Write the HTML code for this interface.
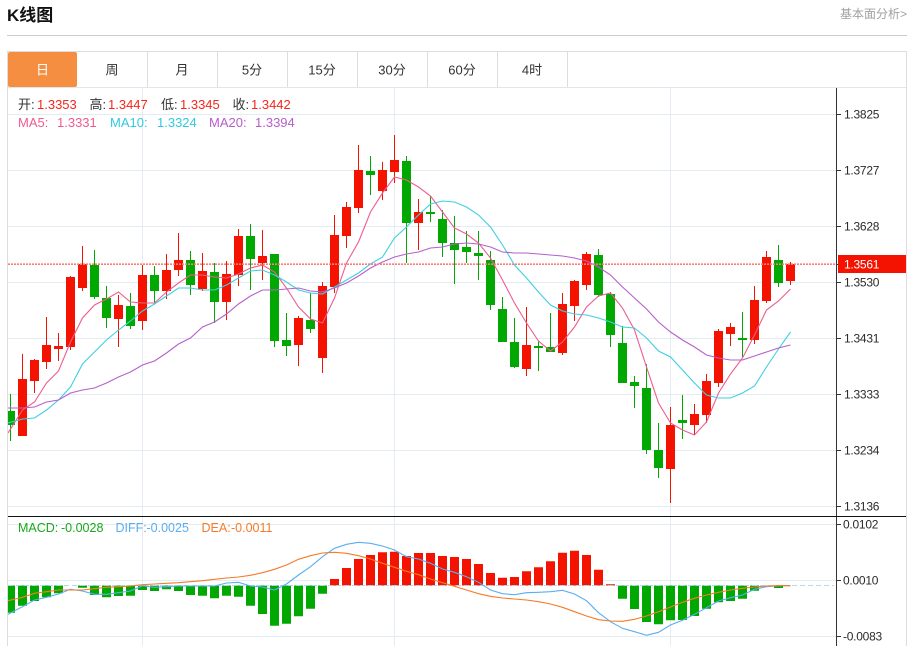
<!DOCTYPE html>
<html lang="zh"><head><meta charset="utf-8"><title>K线图</title>
<style>
html,body{margin:0;padding:0;background:#fff;width:911px;height:646px;overflow:hidden}
svg{display:block;font-family:"Liberation Sans","Noto Sans CJK SC",sans-serif}
</style></head><body>
<svg width="911" height="646" viewBox="0 0 911 646" xmlns="http://www.w3.org/2000/svg">
<defs><clipPath id="c"><rect x="8" y="88" width="828" height="558"/></clipPath></defs>
<text x="7" y="21" font-size="17" font-weight="700" fill="#111">K线图</text>
<text x="907" y="18" font-size="12" fill="#a0a0a0" text-anchor="end">基本面分析&gt;</text>
<rect x="7" y="35" width="900" height="1" fill="#ccc"/>
<!-- frame -->
<rect x="7" y="51" width="900" height="1" fill="#ddd"/>
<rect x="7" y="51" width="1" height="595" fill="#ddd"/>
<rect x="906" y="51" width="1" height="595" fill="#ddd"/>
<rect x="8" y="87" width="898" height="1" fill="#e2e6ea"/>
<path d="M147.5 52V87M217.5 52V87M287.5 52V87M357.5 52V87M427.5 52V87M497.5 52V87M567.5 52V87" stroke="#ddd" fill="none"/>
<rect x="8" y="52" width="69" height="35" rx="2" fill="#f68e42"/>
<g font-size="13" text-anchor="middle" fill="#333">
<text x="42.5" y="74.500" fill="#fff">日</text>
<text x="112" y="74.500">周</text><text x="182" y="74.500">月</text><text x="252" y="74.500">5分</text><text x="322" y="74.500">15分</text><text x="392" y="74.500">30分</text><text x="462" y="74.500">60分</text><text x="532" y="74.500">4时</text>
</g>
<!-- grid -->
<path d="M8 114.500H836M8 170.500H836M8 226.500H836M8 282.500H836M8 338.500H836M8 394.500H836M8 450.500H836M8 506.500H836M8 524.500H836M8 580.500H836M8 636.500H836M142.500 88V646M394.500 88V646M670.500 88V646" stroke="#e3ecf2" fill="none"/>
<g clip-path="url(#c)">
<!-- wicks -->
<path fill="none" stroke="#02a802" d="M10.500 394V441M94.500 250V299M106.500 286V328M130.500 293V329M154.500 266V303M190.500 251V295M214.500 263V323M250.500 224V290M274.500 254V347M286.500 313V356M310.500 293V333M370.500 156V195M406.500 156V263M430.500 196V222M442.500 210V257M454.500 216V284M466.500 231V263M478.500 231V280M490.500 251V310M502.500 297V342M514.500 318V368M538.500 341V371M550.500 313V352M598.500 249V297M610.500 292V347M622.500 326V383M634.500 376V408M646.500 364V454M658.500 423V478M682.500 395V439M742.500 312V357M778.500 245V287"/>
<path fill="none" stroke="#f41300" d="M22.500 354V436M34.500 359V393M46.500 317V369M58.500 333V361M70.500 276V350M82.500 246V291M118.500 295V347M142.500 265V330M166.500 254V299M178.500 233V276M202.500 253V291M226.500 261V320M238.500 229V286M262.500 230V280M298.500 316V366M322.500 282V373M334.500 215V293M346.500 202V248M358.500 145V213M382.500 162V200M394.500 135V183M418.500 199V250M526.500 307V376M562.500 293V355M574.500 280V321M586.500 252V290M670.500 407V503M694.500 404V435M706.500 374V423M718.500 329V387M730.500 323V346M754.500 286V344M766.500 251V303M790.500 262V285"/>
<!-- bodies -->
<path fill="#02a802" d="M6 411h9v14h-9zM90 265h9v32h-9zM102 298h9v20h-9zM126 306h9v20h-9zM150 275h9v16h-9zM186 260h9v25h-9zM210 272h9v30h-9zM246 236h9v23h-9zM270 254h9v87h-9zM282 340h9v6h-9zM306 320h9v9h-9zM366 171h9v4h-9zM402 161h9v62h-9zM426 212h9v2h-9zM438 219h9v24h-9zM450 243h9v7h-9zM462 247h9v5h-9zM474 253h9v3h-9zM486 260h9v45h-9zM498 309h9v33h-9zM510 342h9v25h-9zM534 346h9v2h-9zM546 347h9v5h-9zM594 255h9v40h-9zM606 294h9v41h-9zM618 343h9v40h-9zM630 382h9v4h-9zM642 388h9v62h-9zM654 450h9v18h-9zM678 420h9v3h-9zM738 338h9v2h-9zM774 260h9v23h-9z"/>
<path fill="#f41300" d="M18 379h9v57h-9zM30 360h9v21h-9zM42 345h9v17h-9zM54 346h9v3h-9zM66 277h9v70h-9zM78 264h9v24h-9zM114 305h9v14h-9zM138 275h9v46h-9zM162 270h9v21h-9zM174 260h9v10h-9zM198 271h9v18h-9zM222 274h9v28h-9zM234 236h9v39h-9zM258 256h9v7h-9zM294 318h9v27h-9zM318 286h9v72h-9zM330 235h9v52h-9zM342 207h9v29h-9zM354 170h9v38h-9zM378 170h9v21h-9zM390 160h9v12h-9zM414 212h9v11h-9zM522 345h9v24h-9zM558 304h9v49h-9zM570 281h9v25h-9zM582 254h9v31h-9zM666 425h9v44h-9zM690 414h9v11h-9zM702 381h9v34h-9zM714 331h9v52h-9zM726 327h9v7h-9zM750 300h9v40h-9zM762 257h9v44h-9zM786 264h9v17h-9z"/>
<!-- MA -->
<polyline fill="none" stroke="#ee5c90" stroke-width="1.100" points="8,433 22.500,410 34.500,402 46.500,383 58.500,371 70.500,342 82.500,318 94.500,305 106.500,299 118.500,292 130.500,302 142.500,303 154.500,303 166.500,292 178.500,283 190.500,275 202.500,275 214.500,277 226.500,278 238.500,274 250.500,268 262.500,265 274.500,272 286.500,288 298.500,307 310.500,319 322.500,323 334.500,298 346.500,263 358.500,242 370.500,212 382.500,193 394.500,177 406.500,180 418.500,187 430.500,196 442.500,212 454.500,228 466.500,234 478.500,243 490.500,258 502.500,280 514.500,303 526.500,323 538.500,341 550.500,351 562.500,342 574.500,327 586.500,307 598.500,296 610.500,293 622.500,308 634.500,330 646.500,367 658.500,403 670.500,423 682.500,430 694.500,435 706.500,422 718.500,393 730.500,374 742.500,358 754.500,335 766.500,310 778.500,301 790.500,289"/>
<polyline fill="none" stroke="#3fcfe2" stroke-width="1.100" points="8,423 22.500,419 34.500,418 46.500,410 58.500,400 70.500,387 82.500,364 94.500,352 106.500,340 118.500,330 130.500,321 142.500,311 154.500,304 166.500,296 178.500,288 190.500,288 202.500,290 214.500,290 226.500,285 238.500,278 250.500,271 262.500,270 274.500,275 286.500,282 298.500,290 310.500,293 322.500,294 334.500,287 346.500,280 358.500,273 370.500,264 382.500,257 394.500,238 406.500,227 418.500,215 430.500,204 442.500,201 454.500,202 466.500,207 478.500,215 490.500,227 502.500,245 514.500,265 526.500,278 538.500,292 550.500,305 562.500,311 574.500,314 586.500,315 598.500,318 610.500,322 622.500,327 634.500,328 646.500,338 658.500,351 670.500,357 682.500,370 694.500,383 706.500,395 718.500,398 730.500,398 742.500,393 754.500,386 766.500,367 778.500,349 790.500,332"/>
<polyline fill="none" stroke="#b65fcc" stroke-width="1.100" points="8,408 22.500,408 34.500,407 46.500,402 58.500,400 70.500,393 82.500,390 94.500,388 106.500,383 118.500,377 130.500,372 142.500,365 154.500,361 166.500,353 178.500,344 190.500,338 202.500,327 214.500,322 226.500,314 238.500,304 250.500,296 262.500,290 274.500,290 286.500,289 298.500,288 310.500,291 322.500,292 334.500,288 346.500,283 358.500,276 370.500,268 382.500,262 394.500,257 406.500,254 418.500,252 430.500,248 442.500,247 454.500,244 466.500,243 478.500,244 490.500,247 502.500,252 514.500,253 526.500,253 538.500,254 550.500,255 562.500,256 574.500,258 586.500,261 598.500,267 610.500,275 622.500,287 634.500,298 646.500,309 658.500,322 670.500,332 682.500,340 694.500,347 706.500,355 718.500,358 730.500,360 742.500,360 754.500,356 766.500,352 778.500,348 790.500,345"/>
<!-- MACD bars -->
<path fill="#02a802" d="M6 585.500h9V612.700h-9zM18 585.500h9V605.700h-9zM30 585.500h9V601h-9zM42 585.500h9V597.300h-9zM54 585.500h9V593.300h-9zM78 585.500h9V587.700h-9zM90 585.500h9V595h-9zM102 585.500h9V597.300h-9zM114 585.500h9V596h-9zM126 585.500h9V595.700h-9zM138 585.500h9V590h-9zM150 585.500h9V591h-9zM162 585.500h9V589.300h-9zM174 585.500h9V591h-9zM186 585.500h9V595h-9zM198 585.500h9V595.700h-9zM210 585.500h9V598.300h-9zM222 585.500h9V595.700h-9zM234 585.500h9V596.700h-9zM246 585.500h9V605.700h-9zM258 585.500h9V614h-9zM270 585.500h9V625.700h-9zM282 585.500h9V623.700h-9zM294 585.500h9V616.300h-9zM306 585.500h9V608.700h-9zM318 585.500h9V593.700h-9zM618 585.500h9V598.700h-9zM630 585.500h9V609h-9zM642 585.500h9V622h-9zM654 585.500h9V624.300h-9zM666 585.500h9V620.300h-9zM678 585.500h9V620h-9zM690 585.500h9V616h-9zM702 585.500h9V608.700h-9zM714 585.500h9V602.300h-9zM726 585.500h9V601h-9zM738 585.500h9V598.700h-9zM750 585.500h9V590.700h-9zM762 585.500h9V586.300h-9zM774 585.500h9V588h-9z"/>
<path fill="#f41300" d="M330 579h9V585.500h-9zM342 568h9V585.500h-9zM354 559h9V585.500h-9zM366 555h9V585.500h-9zM378 552.300h9V585.500h-9zM390 551.700h9V585.500h-9zM402 556h9V585.500h-9zM414 553h9V585.500h-9zM426 553h9V585.500h-9zM438 556h9V585.500h-9zM450 557h9V585.500h-9zM462 559h9V585.500h-9zM474 564h9V585.500h-9zM486 573h9V585.500h-9zM498 577.700h9V585.500h-9zM510 577h9V585.500h-9zM522 571.300h9V585.500h-9zM534 567.300h9V585.500h-9zM546 561.300h9V585.500h-9zM558 552.700h9V585.500h-9zM570 550.700h9V585.500h-9zM582 555h9V585.500h-9zM594 569.700h9V585.500h-9zM606 584.300h9V585.500h-9z"/>
<path d="M8 585.500H834" stroke="#a8d8ee" stroke-dasharray="5 3" fill="none" opacity=".9"/>
<polyline fill="none" stroke="#5aaef0" stroke-width="1.100" points="8,614.300 22.500,606.700 34.500,600 46.500,597.300 58.500,594 70.500,589.300 82.500,591 94.500,594.300 106.500,594.300 118.500,592.700 130.500,591 142.500,585.700 154.500,587.300 166.500,586.700 178.500,586 190.500,586 202.500,586 214.500,586 226.500,583 238.500,582.300 250.500,586 262.500,587 274.500,590 286.500,584 298.500,575 310.500,566.700 322.500,556.700 334.500,548.300 346.500,544.300 358.500,542.300 370.500,543.300 382.500,546 394.500,550 406.500,556.700 418.500,559 430.500,563.300 442.500,569 454.500,572.300 466.500,576.700 478.500,582.300 490.500,590 502.500,593.700 514.500,594.700 526.500,592.700 538.500,592.300 550.500,591.700 562.500,590.300 574.500,594 586.500,600.700 598.500,612.700 610.500,621.700 622.500,628.300 634.500,631.700 646.500,635.300 658.500,632.300 670.500,625 682.500,620.300 694.500,614.300 706.500,607.700 718.500,601 730.500,597.700 742.500,595 754.500,589.300 766.500,586.700 778.500,585.700 790.500,585.700"/>
<polyline fill="none" stroke="#f67b28" stroke-width="1.100" points="8,600.700 22.500,597.300 34.500,593.300 46.500,591.700 58.500,590 70.500,590 82.500,590 94.500,588.700 106.500,587.300 118.500,586.700 130.500,586 142.500,584.700 154.500,584 166.500,583.300 178.500,582.700 190.500,581.700 202.500,580.700 214.500,579.300 226.500,578 238.500,577 250.500,575.300 262.500,572.700 274.500,569.300 286.500,565 298.500,559.300 310.500,555.700 322.500,553 334.500,552.300 346.500,553.300 358.500,555.700 370.500,559 382.500,563.300 394.500,567.300 406.500,571.300 418.500,574.700 430.500,579 442.500,582.700 454.500,586.300 466.500,590 478.500,593.700 490.500,596.300 502.500,598 514.500,599 526.500,600 538.500,601.700 550.500,604 562.500,607.300 574.500,611.700 586.500,616 598.500,619.700 610.500,621 622.500,621.300 634.500,619.300 646.500,616 658.500,611.700 670.500,607 682.500,602.300 694.500,598.300 706.500,595 718.500,592.300 730.500,590 742.500,588.300 754.500,587 766.500,586 778.500,585.700 790.500,585.700"/>
</g>
<!-- current price dotted -->
<path d="M8 264.200H836" stroke="#f97f76" stroke-width="1.600" stroke-dasharray="2 1" fill="none"/>
<!-- axis -->
<rect x="836" y="88" width="1" height="558" fill="#333"/>
<rect x="8" y="516" width="898" height="1" fill="#111"/>
<path d="M836 114.500h5M836 170.500h5M836 226.500h5M836 264.500h5M836 282.500h5M836 338.500h5M836 394.500h5M836 450.500h5M836 506.500h5M836 524.500h5M836 580.500h5M836 636.500h5" stroke="#333" fill="none"/>
<rect x="838" y="255" width="68" height="18" fill="#f41300"/>
<g font-size="12" fill="#2a2a2a" letter-spacing="-.25">
<text x="844" y="118.500">1.3825</text><text x="844" y="174.500">1.3727</text><text x="844" y="230.500">1.3628</text>
<text x="844" y="268.500" fill="#fff">1.3561</text>
<text x="844" y="286.500">1.3530</text><text x="844" y="342.500">1.3431</text><text x="844" y="398.500">1.3333</text><text x="844" y="454.500">1.3234</text><text x="844" y="510.500">1.3136</text>
<text x="843" y="528.500">0.0102</text><text x="843" y="584.500">0.0010</text><text x="843" y="640.500">-0.0083</text>
</g>
<!-- legends -->
<g font-size="13">
<text x="18" y="109" fill="#333">开:</text><text x="37" y="109" fill="#f5261b">1.3353</text>
<text x="89.500" y="109" fill="#333">高:</text><text x="108" y="109" fill="#f5261b">1.3447</text>
<text x="161" y="109" fill="#333">低:</text><text x="180" y="109" fill="#f5261b">1.3345</text>
<text x="232.500" y="109" fill="#333">收:</text><text x="251" y="109" fill="#f5261b">1.3442</text>
<text x="18" y="127" fill="#f15a8e">MA5:</text><text x="57" y="127" fill="#f15a8e">1.3331</text>
<text x="110" y="127" fill="#2fcadf">MA10:</text><text x="157" y="127" fill="#2fcadf">1.3324</text>
<text x="209" y="127" fill="#b65ecb">MA20:</text><text x="255" y="127" fill="#b65ecb">1.3394</text>
</g>
<g font-size="12.500">
<text x="18" y="532" fill="#18a818">MACD:</text><text x="61" y="532" fill="#18a818">-0.0028</text>
<text x="115.500" y="532" fill="#5aaef0">DIFF:</text><text x="146.500" y="532" fill="#5aaef0">-0.0025</text>
<text x="201.500" y="532" fill="#f67b28">DEA:</text><text x="231" y="532" fill="#f67b28">-0.0011</text>
</g>
</svg>
</body></html>
